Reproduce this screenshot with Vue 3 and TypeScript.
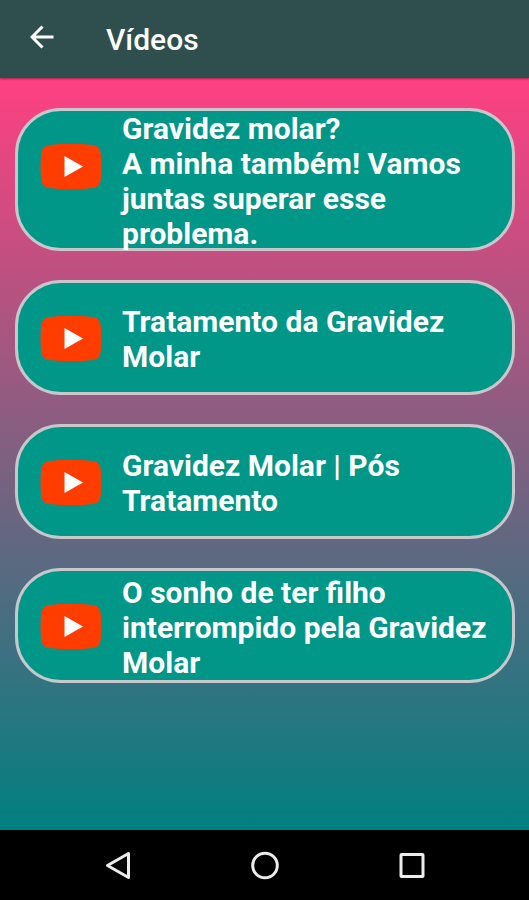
<script setup lang="ts">
interface Video {
  id: number
  title: string
}

const videos: Video[] = [
  { id: 1, title: 'Gravidez molar?\nA minha também! Vamos juntas superar esse problema.' },
  { id: 2, title: 'Tratamento da Gravidez Molar' },
  { id: 3, title: 'Gravidez Molar | Pós Tratamento' },
  { id: 4, title: 'O sonho de ter filho interrompido pela Gravidez Molar' },
]
</script>

<template>
  <div class="screen">
    <header class="app-bar">
      <button class="icon-button" type="button" aria-label="Voltar">
        <svg width="24" height="24" viewBox="0 0 24 24" fill="none" stroke="currentColor" stroke-width="3">
          <path d="M23.500 12H2.500M12.500 1.500L2 12l10.500 10.500" />
        </svg>
      </button>
      <h1 class="title">Vídeos</h1>
    </header>

    <main class="content">
      <ul class="videos">
        <li v-for="video in videos" :key="video.id">
          <button class="card" type="button">
            <svg class="play" width="62" height="48" viewBox="0 0 62 48" aria-hidden="true">
              <path
                fill="#ff3d00"
                d="M9 2Q31 -0.4 53 2Q59.5 3 60.5 9Q62.5 24 60.5 38Q59.5 44 53 45Q31 47.6 9 45Q2.5 44 1.5 38Q-0.5 24 1.5 9Q2.5 3 9 2Z"
              />
              <path fill="#fff" d="M24.5 13V34L43 23.5Z" />
            </svg>
            <span class="label">{{ video.title }}</span>
          </button>
        </li>
      </ul>
    </main>

    <nav class="nav-bar" aria-label="Sistema">
      <button class="nav-button" type="button" aria-label="Voltar">
        <svg width="30" height="30" viewBox="0 0 30 30">
          <path d="M4.5 15.500L25.500 3.500V27.500Z" />
        </svg>
      </button>
      <button class="nav-button" type="button" aria-label="Início">
        <svg width="30" height="30" viewBox="0 0 30 30">
          <circle cx="15" cy="15.500" r="12.300" />
        </svg>
      </button>
      <button class="nav-button" type="button" aria-label="Recentes">
        <svg width="30" height="30" viewBox="0 0 30 30">
          <rect x="4" y="4.500" width="22" height="22" rx="0.500" />
        </svg>
      </button>
    </nav>
  </div>
</template>

<style>
body {
  margin: 0;
  background: #000;
}
</style>

<style scoped>
.screen {
  display: flex;
  flex-direction: column;
  min-height: 100vh;
  font-family: Roboto, 'Liberation Sans', sans-serif;
  color: #fff;
}

button {
  margin: 0;
  padding: 0;
  border: 0;
  background: none;
  color: inherit;
  font: inherit;
  cursor: pointer;
}

.app-bar {
  display: flex;
  align-items: center;
  gap: 40px;
  height: 78px;
  padding: 0 18px;
  background: #2f4f4f;
  box-shadow: 0 1px 2px rgba(0, 0, 0, 0.4);
  z-index: 1;
}

.icon-button {
  display: grid;
  place-items: center;
  width: 48px;
  height: 48px;
  padding-bottom: 4px;
}

.title {
  margin: 0;
  font-size: 30px;
  font-weight: 500;
  line-height: 35px;
}

.content {
  flex: 1;
  padding: 30px 14px 30px 15px;
  background: linear-gradient(#ff4081, #008080);
}

.videos {
  display: flex;
  flex-direction: column;
  gap: 29px;
  margin: 0;
  padding: 0;
  list-style: none;
}

.card {
  display: flex;
  align-items: center;
  gap: 20px;
  box-sizing: border-box;
  width: 100%;
  min-height: 115px;
  padding: 0 22px;
  border: 3px solid #c8c8cc;
  border-radius: 46px;
  background: #009688;
  text-align: left;
}

.play {
  flex: none;
  align-self: flex-start;
  margin-top: 32px;
}

.label {
  flex: 1;
  margin-bottom: -3px;
  font-size: 30px;
  font-weight: 700;
  line-height: 35px;
  white-space: pre-line;
}

.nav-bar {
  display: flex;
  justify-content: center;
  gap: 99px;
  height: 70px;
  background: #000;
}

.nav-button {
  display: grid;
  place-items: center;
  width: 48px;
}

.nav-button svg {
  fill: none;
  stroke: #ececec;
  stroke-width: 3;
  stroke-linejoin: round;
}
</style>
